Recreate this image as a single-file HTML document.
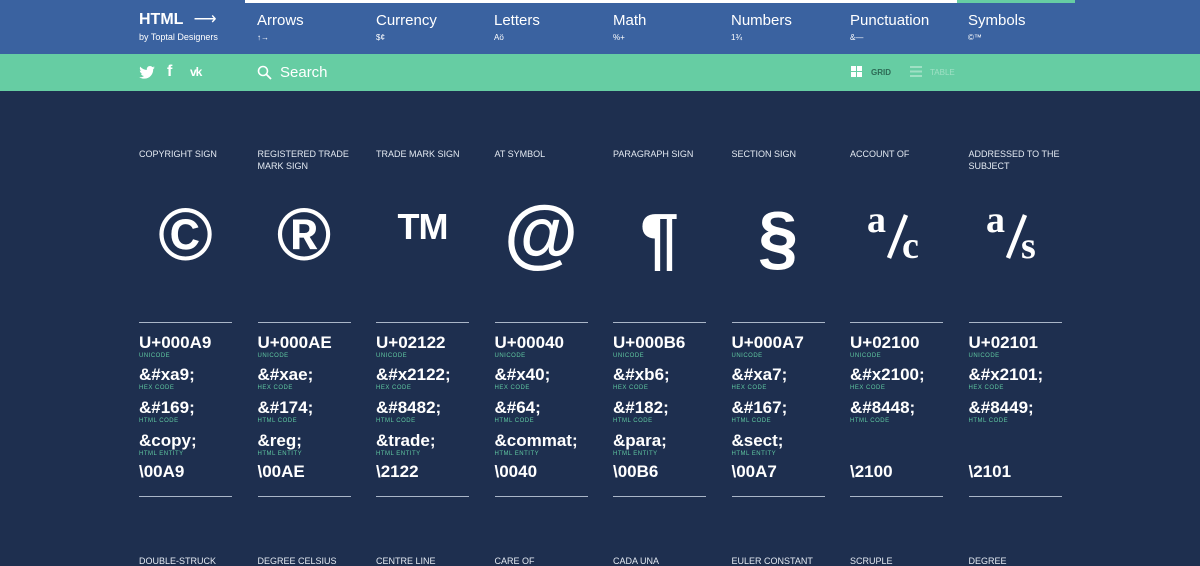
<!DOCTYPE html>
<html><head><meta charset="utf-8"><style>
*{margin:0;padding:0;box-sizing:border-box}
body{width:1200px;height:564px;overflow:hidden;background:#1e2f4f;font-family:"Liberation Sans",Arial,sans-serif;color:#fff;position:relative}
.top{position:absolute;left:0;top:0;width:1200px;height:54px;background:#3a62a0}
.wbar{position:absolute;left:245px;top:0;width:712px;height:3px;background:#fff}
.gbar{position:absolute;left:957px;top:0;width:118px;height:3px;background:#66cda3}
.logo{position:absolute;left:139px;top:9px;font-weight:bold;font-size:16px}
.logo small{display:block;font-weight:normal;font-size:9px;margin-top:3px}
.nav{position:absolute;top:12px;font-size:15px}
.nav small{display:block;font-size:8px;margin-top:4px}
.green{position:absolute;left:0;top:54px;width:1200px;height:37px;background:#66cda3}
.t{position:absolute;top:148px;font-size:9px;line-height:12px;color:#e4eaf2;text-transform:uppercase}
.g{position:absolute;top:195px;width:93px;text-align:center;font-weight:bold;font-size:74px;line-height:80px}
.line{position:absolute;width:93px;height:1px;background:#aab6c8}
.code{position:absolute;font-weight:bold;font-size:17px;line-height:18px;white-space:nowrap}
.lab{position:absolute;font-size:6px;color:#5fc7a0;letter-spacing:.5px}
.b{position:absolute;top:556px;font-size:9px;color:#e4eaf2}
</style></head><body>
<div class="top"></div><div class="wbar"></div><div class="gbar"></div>
<div class="logo">HTML <span style="font-weight:normal;margin-left:6px">⟶</span><small>by Toptal Designers</small></div>
<div class="nav" style="left:257px">Arrows<small>↑→</small></div>
<div class="nav" style="left:376px">Currency<small>$¢</small></div>
<div class="nav" style="left:494px">Letters<small>Aö</small></div>
<div class="nav" style="left:613px">Math<small>%+</small></div>
<div class="nav" style="left:731px">Numbers<small>1¾</small></div>
<div class="nav" style="left:850px">Punctuation<small>&amp;—</small></div>
<div class="nav" style="left:968px">Symbols<small>©™</small></div>
<div class="green">
<svg style="position:absolute;left:139px;top:12px" width="16" height="13" viewBox="0 0 24 20"><path fill="#fff" d="M24 2.4c-.9.4-1.8.6-2.8.8 1-.6 1.8-1.6 2.2-2.7-1 .6-2 1-3.1 1.2C19.3.7 18 0 16.6 0c-2.7 0-4.9 2.2-4.9 4.9 0 .4 0 .8.1 1.1C7.7 5.8 4.1 3.9 1.7.9c-.4.7-.7 1.6-.7 2.5 0 1.7.9 3.2 2.2 4.1-.8 0-1.6-.2-2.2-.6v.1c0 2.4 1.7 4.4 3.9 4.8-.4.1-.8.2-1.3.2-.3 0-.6 0-.9-.1.6 2 2.4 3.4 4.6 3.4-1.7 1.3-3.8 2.1-6.1 2.1-.4 0-.8 0-1.2-.1 2.2 1.4 4.8 2.2 7.5 2.2 9.1 0 14-7.5 14-14v-.6c1-.7 1.8-1.6 2.5-2.5z"/></svg>
<div style="position:absolute;left:167px;top:9px;font-weight:bold;font-size:16px">f</div>
<div style="position:absolute;left:190px;top:11px;font-weight:bold;font-size:12px;letter-spacing:-1px">vk</div>
<svg style="position:absolute;left:257px;top:11px" width="15" height="15" viewBox="0 0 15 15"><circle cx="6" cy="6" r="4.5" fill="none" stroke="#fff" stroke-width="1.6"/><path d="M9.5 9.5L14 14" stroke="#fff" stroke-width="1.8"/></svg>
<div style="position:absolute;left:280px;top:10px;font-size:15px">Search</div>
<svg style="position:absolute;left:851px;top:12px" width="12" height="12"><rect x="0" y="0" width="5" height="5" fill="#fff"/><rect x="6" y="0" width="5" height="5" fill="#fff"/><rect x="0" y="6" width="5" height="5" fill="#fff"/><rect x="6" y="6" width="5" height="5" fill="#fff"/></svg>
<div style="position:absolute;left:871px;top:14px;font-size:8px;color:#2d6a55;font-weight:bold">GRID</div>
<svg style="position:absolute;left:910px;top:12px" width="12" height="12"><rect y="0" width="12" height="2" fill="#9fe0c4"/><rect y="4.5" width="12" height="2" fill="#9fe0c4"/><rect y="9" width="12" height="2" fill="#9fe0c4"/></svg>
<div style="position:absolute;left:930px;top:14px;font-size:8px;color:#9fe0c4">TABLE</div>
</div>

<div id="cols"></div>
<script>
var d=[
["COPYRIGHT SIGN","©","U+000A9","&#xa9;","&#169;","&copy;","\\00A9","DOUBLE-STRUCK"],
["REGISTERED TRADE MARK SIGN","®","U+000AE","&#xae;","&#174;","&reg;","\\00AE","DEGREE CELSIUS"],
["TRADE MARK SIGN","TM","U+02122","&#x2122;","&#8482;","&trade;","\\2122","CENTRE LINE"],
["AT SYMBOL","@","U+00040","&#x40;","&#64;","&commat;","\\0040","CARE OF"],
["PARAGRAPH SIGN","¶","U+000B6","&#xb6;","&#182;","&para;","\\00B6","CADA UNA"],
["SECTION SIGN","§","U+000A7","&#xa7;","&#167;","&sect;","\\00A7","EULER CONSTANT"],
["ACCOUNT OF","c","U+02100","&#x2100;","&#8448;","","\\2100","SCRUPLE"],
["ADDRESSED TO THE SUBJECT","s","U+02101","&#x2101;","&#8449;","","\\2101","DEGREE"]];
function esc(s){return s.replace(/&/g,"&amp;").replace(/</g,"&lt;")}
var h="";
d.forEach(function(c,i){
 var x=139+i*118.5;
 h+='<div class="t" style="left:'+x+'px;width:'+(i==1?95:100)+'px">'+c[0]+'</div>';
 if(i>=6){
  h+='<svg style="position:absolute;left:'+x+'px;top:195px" width="93" height="80"><g font-family="Liberation Serif,serif" font-weight="bold" fill="#fff"><text x="17" y="37" font-size="38">a</text><text x="52" y="63" font-size="38">'+c[1]+'</text></g><path d="M39 63L56 20" stroke="#fff" stroke-width="4.5"/></svg>';
 } else {
 var gs="";
 if(c[1]=="TM")gs="font-size:36px;top:187px;letter-spacing:-1px;";
 if(c[1]=="@")gs="font-size:76px;top:194px;";
 if(c[1]=="¶")gs="font-size:70px;top:198px;";
 if(c[1]=="§")gs="font-size:72px;top:198px;";
 h+='<div class="g" style="left:'+x+'px;'+gs+'">'+c[1]+'</div>';
 }
 h+='<div class="line" style="left:'+x+'px;top:322px"></div><div class="line" style="left:'+x+'px;top:496px"></div>';
 var ys=[334,366,399,432],labs=["UNICODE","HEX CODE","HTML CODE","HTML ENTITY"];
 for(var k=0;k<4;k++){ if(!c[2+k])continue;
  h+='<div class="code" style="left:'+x+'px;top:'+ys[k]+'px">'+esc(c[2+k])+'</div>';
  h+='<div class="lab" style="left:'+x+'px;top:'+(ys[k]+19)+'px">'+labs[k]+'</div>';}
 h+='<div class="code" style="left:'+x+'px;top:463px">'+esc(c[6])+'</div>';
 h+='<div class="b" style="left:'+x+'px">'+c[7]+'</div>';
});
document.getElementById("cols").innerHTML=h;
</script>
</body></html>
